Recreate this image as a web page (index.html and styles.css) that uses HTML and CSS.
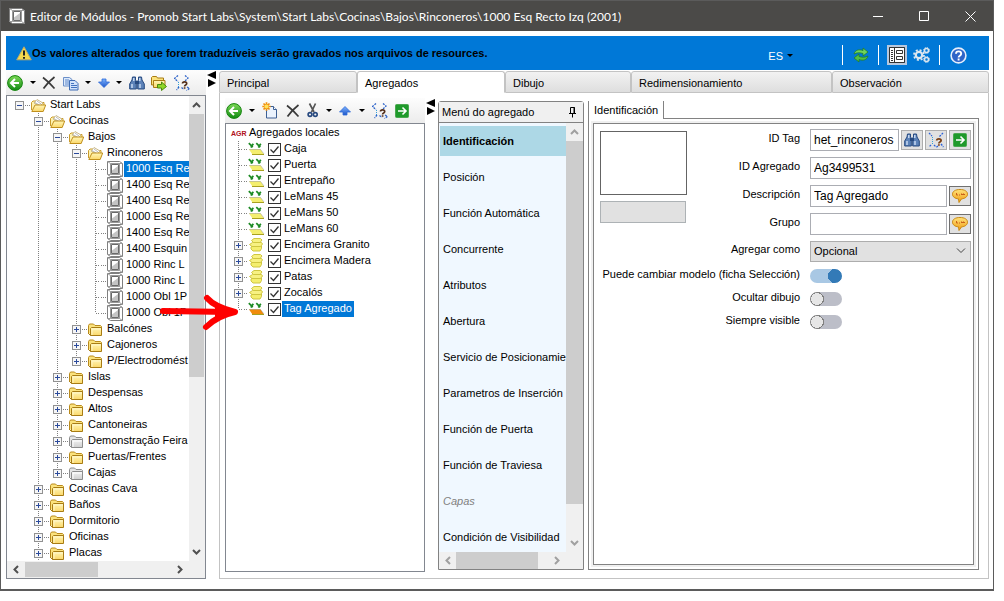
FILE: index.html
```html
<!DOCTYPE html>
<html lang="es">
<head>
    <meta charset="utf-8">
    <title>Editor de Módulos</title>
    <link rel="stylesheet" href="styles.css">
</head>
<body>
    <!-- Icon sprites -->
    <svg class="sprites" aria-hidden="true">
        <defs>
            <linearGradient id="gGreen" x1="0" y1="0" x2="0" y2="1"><stop offset="0" stop-color="#7ed957"/><stop offset="1" stop-color="#0f8a12"/></linearGradient>
            <linearGradient id="gBlue" x1="0" y1="0" x2="0" y2="1"><stop offset="0" stop-color="#7db4ff"/><stop offset="1" stop-color="#1c55c8"/></linearGradient>
            <linearGradient id="gFolder" x1="0" y1="0" x2="0" y2="1"><stop offset="0" stop-color="#fff6b8"/><stop offset="1" stop-color="#fbd86a"/></linearGradient>
            <linearGradient id="gGray" x1="0" y1="0" x2="0" y2="1"><stop offset="0" stop-color="#f2f2f2"/><stop offset="1" stop-color="#cfcfcf"/></linearGradient>
            <linearGradient id="gGold" x1="0" y1="0" x2="0" y2="1"><stop offset="0" stop-color="#ffe27a"/><stop offset="1" stop-color="#f09a10"/></linearGradient>
        </defs>
        <symbol id="i-module" viewBox="0 0 16 16">
            <path d="M.5.5h12l3 2v13h-12l-3-2z" fill="#fff" stroke="#808080"/>
            <path d="M.5.5l3 2h12M3.500 2.500v11L.5 13.500M12.500 13.500l3 2M3.500 13.500h9v-11" fill="none" stroke="#9a9a9a"/>
            <path d="M4.500 3.500h7v9h-7z" fill="#fff" stroke="#6a6a6a"/>
            <path d="M5 12V9.500L11 5v7z" fill="#c4c4c4"/>
        </symbol>
        <symbol id="i-open" viewBox="0 0 16 16">
            <path d="M.5 13V5.500L2 4h3l1 1.500h7V8" fill="#fff3b0" stroke="#c99b2c"/>
            <path d="M3 6l3-3.500L12 6l-3 3z" fill="#fff" stroke="#c9b98a"/>
            <path d="M4 5.500l5 3M6 4l4 3" stroke="#b9b9b9" fill="none"/>
            <path d="M.8 14.500L4 8h10.700l-2.500 6.500z" fill="url(#gFolder)" stroke="#c08f1c"/>
        </symbol>
        <symbol id="i-folder" viewBox="0 0 16 16">
            <path d="M.5 13V4.500L1.500 3h4l1.500 1.500h5.500l1 1V7" fill="#fbe27c" stroke="#b98a1c"/>
            <path d="M2.500 14.500v-7l1-1h10v8z" fill="url(#gFolder)" stroke="#a87c14"/>
            <path d="M4 14V8h9" stroke="#fff6c8" fill="none"/>
            <path d="M.5 12.500l2 2" stroke="#a87c14" fill="none"/>
        </symbol>
        <symbol id="i-folder-gray" viewBox="0 0 16 16">
            <path d="M.5 13V4.500L1.500 3h4l1.500 1.500h5.500l1 1V7" fill="#e4e4e4" stroke="#8c8c8c"/>
            <path d="M2.500 14.500v-7l1-1h10v8z" fill="url(#gGray)" stroke="#8c8c8c"/>
            <path d="M4 14V8h9" stroke="#fff" fill="none"/>
            <path d="M.5 12.500l2 2" stroke="#8c8c8c" fill="none"/>
        </symbol>
        <symbol id="i-back" viewBox="0 0 16 16">
            <circle cx="8" cy="8" r="7.400" fill="url(#gGreen)" stroke="#16860f"/>
            <path d="M8 4L4 8l4 4M4.500 8H12" fill="none" stroke="#fff" stroke-width="2"/>
        </symbol>
        <symbol id="i-delete" viewBox="0 0 14 14">
            <path d="M1 1.500c4 3 8 7 11.500 11M12.500 1C8 4.500 4 9 1.500 12.500" fill="none" stroke="#3a3a3a" stroke-width="1.700"/>
        </symbol>
        <symbol id="i-copy" viewBox="0 0 16 16">
            <path d="M.5 2.500h6l2.500 2V11H.5z" fill="#dce9fb" stroke="#6b8fc8"/>
            <path d="M2 5h4M2 7h4M2 9h4" stroke="#5f88c9"/>
            <path d="M6.500 5.500h5.500l3 3v6.500H6.500z" fill="#d2e3fb" stroke="#3f6db5"/>
            <path d="M8 8.500h3M8 10.500h6M8 12.500h6" stroke="#4374c0"/>
        </symbol>
        <symbol id="i-down" viewBox="0 0 12 10">
            <path d="M4 1h4v3h3.500L6 9.500.5 4H4z" fill="url(#gBlue)" stroke="#2f6bd8" stroke-width=".8"/>
        </symbol>
        <symbol id="i-up" viewBox="0 0 12 10">
            <path d="M4 9h4V6h3.500L6 .5.5 6H4z" fill="url(#gBlue)" stroke="#2f6bd8" stroke-width=".8"/>
        </symbol>
        <symbol id="i-find" viewBox="0 0 16 14">
            <path d="M3.500 1h3v3l.8 1v8H.7V8L3 4zM12.500 1h-3v3l-.8 1v8h6.600V8L13 4z" fill="#5c82b8" stroke="#274a80"/>
            <path d="M6 5h4v3H6z" fill="#274a80"/>
            <path d="M3 8v4M11 8v4M4.800 2v3M10.800 2v3" stroke="#d7e6fa" stroke-width="1.300"/>
        </symbol>
        <symbol id="i-move" viewBox="0 0 16 16">
            <path d="M.5 10V2.500l1-1h4l1 1.500h6V9z" fill="#fbe27c" stroke="#a87c14"/>
            <path d="M2.500 12.500v-7h11.500v7z" fill="url(#gFolder)" stroke="#a87c14"/>
            <path d="M6.500 9.500h4V7l5 4.500-5 4V13h-4z" fill="#8fd628" stroke="#4b8a10"/>
        </symbol>
        <symbol id="i-where" viewBox="0 0 16 16">
            <path d="M4 .5L.5 3.500 4 6.500" fill="none" stroke="#2c62c8" stroke-width="1.300" stroke-dasharray="2 1"/>
            <path d="M4.500 7v5" stroke="#35a0d8" stroke-dasharray="1 1"/>
            <path d="M11 .5L14 3l-3 3M5 12l-2.500 3M7.500 12.500l2.500 2M13 12l2.500 1.500-3 2" fill="none" stroke="#2c62c8" stroke-width="1.300" stroke-dasharray="2 1"/>
            <path d="M8.500 8.500c0-2.300 4.200-2.300 4.200 0 0 1.700-2.100 1.300-2.100 2.900M10.600 12.200v1.500" fill="none" stroke="#54301c" stroke-width="1.700"/>
        </symbol>
        <symbol id="i-where-field" viewBox="0 0 16 16">
            <path d="M1 1l3 3M15 1l-4 4M3 13l-2 2M6 13l2 2M13 12l2.500 3M10 14l-2 1.500" fill="none" stroke="#2c62d8" stroke-width="1.300" stroke-dasharray="2 1"/>
            <path d="M4.500 5v8" stroke="#35a0d8" stroke-dasharray="1 1"/>
            <path d="M8.700 8.500c0-2.300 4.400-2.300 4.400 0 0 1.700-2.200 1.300-2.200 2.900M10.900 12.200v1.600" fill="none" stroke="#7a3f14" stroke-width="1.800"/>
        </symbol>
        <symbol id="i-new" viewBox="0 0 16 17">
            <path d="M4.500 4.500h7l3 3v8.500h-10z" fill="#eaf2fd" stroke="#3c5f94"/>
            <path d="M11.500 4.500v3h3" fill="#fff" stroke="#3c5f94"/>
            <path d="M4.500.3v8.400M.3 4.500h8.400M1.500 1.500l6 6M7.500 1.500l-6 6" stroke="#f0900c" stroke-width="1.700"/>
            <circle cx="4.500" cy="4.500" r="2" fill="#ffe25a"/>
        </symbol>
        <symbol id="i-cut" viewBox="0 0 12 15">
            <path d="M2.500.5L7 9M8.500.5L4.500 9" stroke="#555" stroke-width="1.700" fill="none"/>
            <circle cx="3" cy="11.500" r="1.900" fill="none" stroke="#27497f" stroke-width="1.600"/>
            <circle cx="8.300" cy="11.500" r="1.900" fill="none" stroke="#27497f" stroke-width="1.600"/>
        </symbol>
        <symbol id="i-go" viewBox="0 0 14 14">
            <rect x=".5" y=".5" width="13" height="13" rx="1" fill="#1f9a2b" stroke="#4aa850"/>
            <path d="M7.500 3.500L11 7l-3.500 3.500M3 7h7.500" fill="none" stroke="#fff" stroke-width="1.600"/>
        </symbol>
        <symbol id="i-part" viewBox="0 0 17 14">
            <path d="M.8 1.200l4 4M5.300 1.800L2.800 5.500M8.300 1.200l4 4M12.800 1.800l-2.500 3.700" fill="none" stroke="#1d8a24" stroke-width="1.700"/>
            <path d="M1 7.500h11.500l3.500 5H4.500z" fill="currentColor"/>
            <path d="M1 7.500h11.500l3.500 4.500" fill="none" stroke="#000" stroke-opacity=".2"/>
            <path d="M4 12.500h12" stroke="#a8a020"/>
        </symbol>
        <symbol id="i-stack" viewBox="0 0 17 16">
            <path d="M3 12V10l2-1h8.500v2.500l-1.500 2.500H5z" fill="#f4ee6e" stroke="#cfc640"/>
            <path d="M1.500 7.500l3-2h9l1 1.500-2 2.500H4z" fill="#f7f182" stroke="#cfc640"/>
            <path d="M3.500 3.500l2.500-2h6.500l1.500 1.500-2 2.500H5.500z" fill="#f7f182" stroke="#cfc640"/>
        </symbol>
        <symbol id="i-balloon" viewBox="0 0 16 16">
            <path d="M8 1.500c4.500 0 7.500 1.700 7.500 4.700 0 2.600-2.500 4.300-6 4.700L7 14.500l-.5-3.600C3 10.500.5 8.800.5 6.200.5 3.200 3.500 1.500 8 1.500z" fill="url(#gGold)" stroke="#c98a14"/>
            <path d="M4.500 5v2H6M7 7h1M9.500 5.500v1M11.500 5.500v1M9 6.500h4" fill="none" stroke="#c8601a"/>
        </symbol>
    </svg>

    <div class="window">
        <header class="titlebar">
            <svg width="16" height="16"><use href="#i-module"/></svg>
            <h1>Editor de Módulos - Promob Start Labs\System\Start Labs\Cocinas\Bajos\Rinconeros\1000 Esq Recto Izq (2001)</h1>
            <button class="caption" aria-label="Minimizar"><svg width="11" height="11"><path d="M0 5.500h10" stroke="#fff"/></svg></button>
            <button class="caption" aria-label="Maximizar"><svg width="11" height="11"><path d="M.5.5h9v9h-9z" fill="none" stroke="#fff"/></svg></button>
            <button class="caption" aria-label="Cerrar"><svg width="11" height="11"><path d="M.5.5l10 10M10.500.5l-10 10" stroke="#fff"/></svg></button>
        </header>

        <div class="banner">
            <svg width="16" height="15" viewBox="0 0 16 15"><path d="M8 .8l7.300 13H.7z" fill="#f4d84e" stroke="#b8a86a"/><path d="M8 4.500v5M8 11v1.700" stroke="#222" stroke-width="2"/></svg>
            <strong>Os valores alterados que forem traduzíveis serão gravados nos arquivos de resources.</strong>
            <button class="lang">ES <i class="caret"></i></button>
            <button class="tool sep" aria-label="Actualizar"><svg width="16" height="16"><path d="M1 7c1-4 5-5 9-3.500V1l5 4-5 4V6.500C7 5.500 4 5.500 1 7z" fill="#6fd45a" stroke="#1f7d2a" stroke-width=".8"/><path d="M15 9c-1 4-5 5-9 3.500V15l-5-4 5-4v2.500c3 1 6 1 9-.5z" fill="#52bf42" stroke="#1f7d2a" stroke-width=".8"/></svg></button>
            <button class="tool sep pressed" aria-label="Ficha"><svg width="16" height="16"><path d="M.5.5h15v15H.5z" fill="#fff" stroke="#333"/><path d="M5.500 1v14M2 3.500h2M2 5.500h2M2 7.500h2M2 9.500h2M2 11.500h2M2 13.500h2" stroke="#333"/><path d="M7.500 3.500h6v3h-6zM7.500 9.500h6v3h-6z" fill="none" stroke="#333"/></svg></button>
            <button class="tool" aria-label="Opciones"><svg width="17" height="16"><g fill="none" stroke="#dbe6ef"><circle cx="6" cy="8" r="3.200" stroke-width="2.200"/><circle cx="6" cy="8" r="5" stroke-width="1.800" stroke-dasharray="2 1.930"/><circle cx="13.500" cy="3.500" r="2" stroke-width="1.500"/><circle cx="13.500" cy="3.500" r="3" stroke-dasharray="1.200 1.150"/><circle cx="13.500" cy="12.500" r="2" stroke-width="1.500"/><circle cx="13.500" cy="12.500" r="3" stroke-dasharray="1.200 1.150"/></g></svg></button>
            <button class="tool sep" aria-label="Ayuda"><svg width="17" height="17"><circle cx="8.500" cy="8.500" r="7.400" fill="#2f64c8" stroke="#e6eefb" stroke-width="1.600"/><path d="M6 6.800c0-3.200 5.200-3.200 5.200 0 0 2-2.600 1.800-2.600 3.600M8.600 11.600v1.800" fill="none" stroke="#fff" stroke-width="1.900"/></svg></button>
        </div>

        <div class="workspace">
            <section class="side">
                <div class="toolbar">
                    <button aria-label="Atrás"><svg width="16" height="16"><use href="#i-back"/></svg></button>
                    <i class="caret"></i>
                    <button aria-label="Eliminar"><svg width="14" height="14"><use href="#i-delete"/></svg></button>
                    <button aria-label="Copiar"><svg width="16" height="16"><use href="#i-copy"/></svg></button>
                    <i class="caret"></i>
                    <button aria-label="Bajar"><svg width="12" height="10"><use href="#i-down"/></svg></button>
                    <i class="caret"></i>
                    <button aria-label="Buscar"><svg width="16" height="14"><use href="#i-find"/></svg></button>
                    <button aria-label="Mover"><svg width="16" height="16"><use href="#i-move"/></svg></button>
                    <button aria-label="Localizar"><svg width="16" height="16"><use href="#i-where"/></svg></button>
                </div>
                <div class="panel scroll-box">
                    <ul class="tree module-tree">
                        <li>
                            <div class="row"><button class="expander open" aria-label="Contraer"></button><i class="dots"></i><svg><use href="#i-open"/></svg><span class="name">Start Labs</span></div>
                            <ul>
                                <li>
                                    <div class="row"><button class="expander open" aria-label="Contraer"></button><i class="dots"></i><svg><use href="#i-open"/></svg><span class="name">Cocinas</span></div>
                                    <ul>
                                        <li>
                                            <div class="row"><button class="expander open" aria-label="Contraer"></button><i class="dots"></i><svg><use href="#i-open"/></svg><span class="name">Bajos</span></div>
                                            <ul>
                                                <li>
                                                    <div class="row"><button class="expander open" aria-label="Contraer"></button><i class="dots"></i><svg><use href="#i-open"/></svg><span class="name">Rinconeros</span></div>
                                                    <ul>
                                                        <li><div class="row"><i class="leaf"></i><i class="dots"></i><svg><use href="#i-module"/></svg><span class="name selected">1000 Esq Re</span></div></li>
                                                        <li><div class="row"><i class="leaf"></i><i class="dots"></i><svg><use href="#i-module"/></svg><span class="name">1400 Esq Re</span></div></li>
                                                        <li><div class="row"><i class="leaf"></i><i class="dots"></i><svg><use href="#i-module"/></svg><span class="name">1400 Esq Re</span></div></li>
                                                        <li><div class="row"><i class="leaf"></i><i class="dots"></i><svg><use href="#i-module"/></svg><span class="name">1000 Esq Re</span></div></li>
                                                        <li><div class="row"><i class="leaf"></i><i class="dots"></i><svg><use href="#i-module"/></svg><span class="name">1400 Esq Re</span></div></li>
                                                        <li><div class="row"><i class="leaf"></i><i class="dots"></i><svg><use href="#i-module"/></svg><span class="name">1400 Esquin</span></div></li>
                                                        <li><div class="row"><i class="leaf"></i><i class="dots"></i><svg><use href="#i-module"/></svg><span class="name">1000 Rinc L</span></div></li>
                                                        <li><div class="row"><i class="leaf"></i><i class="dots"></i><svg><use href="#i-module"/></svg><span class="name">1000 Rinc L</span></div></li>
                                                        <li><div class="row"><i class="leaf"></i><i class="dots"></i><svg><use href="#i-module"/></svg><span class="name">1000 Obl 1P</span></div></li>
                                                        <li><div class="row"><i class="leaf"></i><i class="dots"></i><svg><use href="#i-module"/></svg><span class="name">1000 Obl 1P</span></div></li>
                                                    </ul>
                                                </li>
                                                <li><div class="row"><button class="expander" aria-label="Expandir"></button><i class="dots"></i><svg><use href="#i-folder"/></svg><span class="name">Balcónes</span></div></li>
                                                <li><div class="row"><button class="expander" aria-label="Expandir"></button><i class="dots"></i><svg><use href="#i-folder"/></svg><span class="name">Cajoneros</span></div></li>
                                                <li><div class="row"><button class="expander" aria-label="Expandir"></button><i class="dots"></i><svg><use href="#i-folder"/></svg><span class="name">P/Electrodomést</span></div></li>
                                            </ul>
                                        </li>
                                        <li><div class="row"><button class="expander" aria-label="Expandir"></button><i class="dots"></i><svg><use href="#i-folder"/></svg><span class="name">Islas</span></div></li>
                                        <li><div class="row"><button class="expander" aria-label="Expandir"></button><i class="dots"></i><svg><use href="#i-folder"/></svg><span class="name">Despensas</span></div></li>
                                        <li><div class="row"><button class="expander" aria-label="Expandir"></button><i class="dots"></i><svg><use href="#i-folder"/></svg><span class="name">Altos</span></div></li>
                                        <li><div class="row"><button class="expander" aria-label="Expandir"></button><i class="dots"></i><svg><use href="#i-folder"/></svg><span class="name">Cantoneiras</span></div></li>
                                        <li><div class="row"><button class="expander" aria-label="Expandir"></button><i class="dots"></i><svg><use href="#i-folder-gray"/></svg><span class="name">Demonstração Feira</span></div></li>
                                        <li><div class="row"><button class="expander" aria-label="Expandir"></button><i class="dots"></i><svg><use href="#i-folder"/></svg><span class="name">Puertas/Frentes</span></div></li>
                                        <li><div class="row"><button class="expander" aria-label="Expandir"></button><i class="dots"></i><svg><use href="#i-folder-gray"/></svg><span class="name">Cajas</span></div></li>
                                    </ul>
                                </li>
                                <li><div class="row"><button class="expander" aria-label="Expandir"></button><i class="dots"></i><svg><use href="#i-folder"/></svg><span class="name">Cocinas Cava</span></div></li>
                                <li><div class="row"><button class="expander" aria-label="Expandir"></button><i class="dots"></i><svg><use href="#i-folder"/></svg><span class="name">Baños</span></div></li>
                                <li><div class="row"><button class="expander" aria-label="Expandir"></button><i class="dots"></i><svg><use href="#i-folder"/></svg><span class="name">Dormitorio</span></div></li>
                                <li><div class="row"><button class="expander" aria-label="Expandir"></button><i class="dots"></i><svg><use href="#i-folder"/></svg><span class="name">Oficinas</span></div></li>
                                <li class="more"><div class="row"><button class="expander" aria-label="Expandir"></button><i class="dots"></i><svg><use href="#i-folder"/></svg><span class="name">Placas</span></div></li>
                            </ul>
                        </li>
                    </ul>
                    <div class="bar vertical">
                        <svg width="9" height="6"><path d="M1 5l3.500-3.500L8 5"/></svg><i class="thumb"></i><svg width="9" height="6"><path d="M1 1l3.500 3.500L8 1"/></svg>
                    </div>
                    <div class="bar horizontal">
                        <svg width="6" height="9"><path d="M5 1L1.500 4.500 5 8"/></svg><i class="thumb"></i><svg width="6" height="9"><path d="M1 1l3.500 3.500L1 8"/></svg>
                    </div>
                </div>
            </section>

            <button class="splitter" aria-label="Dividir"><svg width="10" height="20"><path d="M10 1v8L1 5zM2 9v8l8-4z"/></svg></button>

            <main class="editor">
                <nav class="tabs">
                    <button>Principal</button>
                    <button class="active">Agregados</button>
                    <button>Dibujo</button>
                    <button>Redimensionamiento</button>
                    <button>Observación</button>
                </nav>
                <div class="tab-body">
                    <section class="side">
                        <div class="toolbar">
                            <button aria-label="Atrás"><svg width="16" height="16"><use href="#i-back"/></svg></button>
                            <i class="caret"></i>
                            <button aria-label="Nuevo"><svg width="16" height="17"><use href="#i-new"/></svg></button>
                            <button aria-label="Eliminar"><svg width="14" height="14"><use href="#i-delete"/></svg></button>
                            <button aria-label="Cortar"><svg width="12" height="15"><use href="#i-cut"/></svg></button>
                            <i class="caret"></i>
                            <button aria-label="Subir"><svg width="12" height="10"><use href="#i-up"/></svg></button>
                            <i class="caret"></i>
                            <button aria-label="Localizar"><svg width="16" height="16"><use href="#i-where"/></svg></button>
                            <button aria-label="Ir"><svg width="14" height="14"><use href="#i-go"/></svg></button>
                        </div>
                        <div class="panel">
                            <ul class="tree part-tree">
                                <li>
                                    <div class="row root"><b class="agr">AGR</b><span class="name">Agregados locales</span></div>
                                    <ul>
                                        <li><div class="row"><i class="leaf"></i><i class="dots"></i><svg><use href="#i-part"/></svg><input type="checkbox" id="p1" checked><label class="name" for="p1">Caja</label></div></li>
                                        <li><div class="row"><i class="leaf"></i><i class="dots"></i><svg><use href="#i-part"/></svg><input type="checkbox" id="p2" checked><label class="name" for="p2">Puerta</label></div></li>
                                        <li><div class="row"><i class="leaf"></i><i class="dots"></i><svg><use href="#i-part"/></svg><input type="checkbox" id="p3" checked><label class="name" for="p3">Entrepaño</label></div></li>
                                        <li><div class="row"><i class="leaf"></i><i class="dots"></i><svg><use href="#i-part"/></svg><input type="checkbox" id="p4" checked><label class="name" for="p4">LeMans 45</label></div></li>
                                        <li><div class="row"><i class="leaf"></i><i class="dots"></i><svg><use href="#i-part"/></svg><input type="checkbox" id="p5" checked><label class="name" for="p5">LeMans 50</label></div></li>
                                        <li><div class="row"><i class="leaf"></i><i class="dots"></i><svg><use href="#i-part"/></svg><input type="checkbox" id="p6" checked><label class="name" for="p6">LeMans 60</label></div></li>
                                        <li><div class="row"><button class="expander" aria-label="Expandir"></button><i class="dots"></i><svg class="stack"><use href="#i-stack"/></svg><input type="checkbox" id="p7" checked><label class="name" for="p7">Encimera Granito</label></div></li>
                                        <li><div class="row"><button class="expander" aria-label="Expandir"></button><i class="dots"></i><svg class="stack"><use href="#i-stack"/></svg><input type="checkbox" id="p8" checked><label class="name" for="p8">Encimera Madera</label></div></li>
                                        <li><div class="row"><button class="expander" aria-label="Expandir"></button><i class="dots"></i><svg class="stack"><use href="#i-stack"/></svg><input type="checkbox" id="p9" checked><label class="name" for="p9">Patas</label></div></li>
                                        <li><div class="row"><button class="expander" aria-label="Expandir"></button><i class="dots"></i><svg class="stack"><use href="#i-stack"/></svg><input type="checkbox" id="p10" checked><label class="name" for="p10">Zocalós</label></div></li>
                                        <li><div class="row"><i class="leaf"></i><i class="dots"></i><svg class="orange"><use href="#i-part"/></svg><input type="checkbox" id="p11" checked><label class="name selected" for="p11">Tag Agregado</label></div></li>
                                    </ul>
                                </li>
                            </ul>
                        </div>
                    </section>

                    <button class="splitter" aria-label="Dividir"><svg width="10" height="20"><path d="M10 1v8L1 5zM2 9v8l8-4z"/></svg></button>

                    <aside class="menu">
                        <header>
                            <span>Menú do agregado</span>
                            <button aria-label="Fijar"><svg width="9" height="12"><path d="M2.500 7V1.500h4V7M1 7.500h7M4.500 8v3.500" fill="none" stroke="#000"/><path d="M6 1v6" stroke="#000"/></svg></button>
                        </header>
                        <div class="scroll-box light">
                            <ul class="options">
                                <li><a href="#" class="current">Identificación</a></li>
                                <li><a href="#">Posición</a></li>
                                <li><a href="#">Función Automática</a></li>
                                <li><a href="#">Concurrente</a></li>
                                <li><a href="#">Atributos</a></li>
                                <li><a href="#">Abertura</a></li>
                                <li><a href="#">Servicio de Posicionamie</a></li>
                                <li><a href="#">Parametros de Inserción</a></li>
                                <li><a href="#">Función de Puerta</a></li>
                                <li><a href="#">Función de Traviesa</a></li>
                                <li><a href="#" class="disabled">Capas</a></li>
                                <li><a href="#">Condición de Visibilidad</a></li>
                            </ul>
                            <div class="bar vertical">
                                <svg width="9" height="6"><path d="M1 5l3.500-3.500L8 5"/></svg><i class="thumb"></i><svg width="9" height="6"><path d="M1 1l3.500 3.500L8 1"/></svg>
                            </div>
                            <div class="bar horizontal">
                                <svg width="6" height="9"><path d="M5 1L1.500 4.500 5 8"/></svg><i class="thumb"></i><svg width="6" height="9"><path d="M1 1l3.500 3.500L1 8"/></svg>
                            </div>
                        </div>
                    </aside>

                    <section class="properties">
                        <div class="page-tabs"><button>Identificación</button><i></i></div>
                        <div class="page">
                            <form class="fields">
                                <div class="preview">
                                    <div class="thumbnail"></div>
                                    <button type="button" aria-label="Imagen"></button>
                                </div>
                                <label for="tag">ID Tag</label>
                                <div class="control">
                                    <input type="text" id="tag" value="het_rinconeros">
                                    <button type="button" aria-label="Buscar"><svg width="16" height="14"><use href="#i-find"/></svg></button>
                                    <button type="button" aria-label="Localizar"><svg width="16" height="16"><use href="#i-where-field"/></svg></button>
                                    <button type="button" aria-label="Ir"><svg width="14" height="14"><use href="#i-go"/></svg></button>
                                </div>
                                <label for="agregado">ID Agregado</label>
                                <div class="control"><input type="text" id="agregado" value="Ag3499531"></div>
                                <label for="descripcion">Descripción</label>
                                <div class="control">
                                    <input type="text" id="descripcion" value="Tag Agregado">
                                    <button type="button" class="translate" aria-label="Traducir"><svg width="16" height="16"><use href="#i-balloon"/></svg></button>
                                </div>
                                <label for="grupo">Grupo</label>
                                <div class="control">
                                    <input type="text" id="grupo">
                                    <button type="button" class="translate" aria-label="Traducir"><svg width="16" height="16"><use href="#i-balloon"/></svg></button>
                                </div>
                                <label for="como">Agregar como</label>
                                <div class="control"><select id="como"><option>Opcional</option></select></div>
                                <label class="wide" for="cambiar">Puede cambiar modelo (ficha Selección)</label>
                                <div class="control"><input type="checkbox" class="switch" id="cambiar" checked></div>
                                <label for="ocultar">Ocultar dibujo</label>
                                <div class="control"><input type="checkbox" class="switch" id="ocultar"></div>
                                <label for="visible">Siempre visible</label>
                                <div class="control"><input type="checkbox" class="switch" id="visible"></div>
                            </form>
                        </div>
                    </section>
                </div>
            </main>
        </div>
    </div>

    <!-- Annotation over both trees -->
    <svg class="pointer" width="84" height="42" aria-hidden="true"><path d="M4 19L72 20" fill="none" stroke="#fe0000" stroke-width="6" stroke-linecap="round"/><path d="M48 6C54 13 64 17 76 20 62 23 54 28 47 35" fill="none" stroke="#fe0000" stroke-width="6" stroke-linecap="round" stroke-linejoin="round"/><path d="M56 13L78 20L56 27z" fill="#fe0000"/></svg>
</body>
</html>
```
FILE: styles.css
```css
* {
    box-sizing: border-box;
}
body {
    margin: 0;
    padding: 0 10px 10px 0;
    height: 100vh;
    background: #fff;
    color: #000;
    font: 11px "Liberation Sans", Arial, sans-serif;
}
button {
    font: inherit;
    color: inherit;
    background: none;
    border: none;
    padding: 0;
}
ul {
    list-style: none;
    margin: 0;
    padding: 0;
}
svg {
    display: block;
    flex: none;
}
.sprites {
    position: absolute;
    width: 0;
    height: 0;
}
.window {
    display: flex;
    flex-direction: column;
    height: 100%;
    border: 1px solid #5b5b5b;
    border-top: none;
    border-bottom-width: 2px;
}

/* Title bar */
.titlebar {
    display: flex;
    align-items: center;
    height: 31px;
    padding-left: 8px;
    background: #4b4a48;
    border-top: 1px solid #5b5b5b;
    color: #fff;
}
.titlebar h1 {
    flex: 1;
    margin: 0 0 0 5px;
    font: 12px Lato, "Segoe UI", sans-serif;
    white-space: nowrap;
}
.caption {
    display: flex;
    justify-content: center;
    width: 46px;
}

/* Warning banner */
.banner {
    display: flex;
    align-items: center;
    height: 34px;
    margin: 5px 4px 0 5px;
    padding: 0 20px 0 10px;
    background: #0078d7;
}
.banner strong {
    flex: 1;
    white-space: nowrap;
}
.lang {
    display: flex;
    align-items: center;
    gap: 4px;
    margin: 5px 42px 0 0;
    color: #fff;
}
.caret {
    flex: none;
    border: 3px solid transparent;
    border-top-color: #000;
    border-bottom: none;
}
.tool {
    display: flex;
    align-items: center;
    height: 20px;
    margin-top: 4px;
    padding: 0 2px;
}
.tool.sep {
    margin-left: 7px;
    padding-left: 10px;
    border-left: 1px solid #fff;
}
.tool.pressed svg {
    outline: 2px solid #b9c8dd;
}
.tool.pressed + .tool {
    margin-left: 4px;
}

/* Main areas */
.workspace {
    flex: 1;
    display: grid;
    grid-template-columns: 200px 13px minmax(0, 1fr);
    min-height: 0;
    padding: 0 4px 10px 5px;
}
.side {
    display: flex;
    flex-direction: column;
    min-width: 0;
    min-height: 0;
}
.toolbar {
    display: flex;
    align-items: center;
    justify-content: space-between;
    flex: none;
    height: 25px;
    padding: 0 16px 0 1px;
    background: linear-gradient(#fdfdfd, #ececec);
}
.panel {
    flex: 1;
    min-height: 0;
    overflow: hidden;
    background: #fff;
    border: 1px solid #828790;
}
.splitter {
    display: flex;
    align-items: flex-start;
}

/* Scrollable boxes */
.scroll-box {
    display: grid;
    grid-template-columns: minmax(0, 1fr) 17px;
    grid-template-rows: minmax(0, 1fr) 17px;
    background: #f0f0f0;
}
.panel.scroll-box {
    grid-template-columns: minmax(0, 1fr) 16px;
}
.scroll-box > ul {
    overflow: hidden;
    background: #fff;
}
.bar {
    display: flex;
    align-items: center;
    justify-content: space-between;
}
.bar path {
    fill: none;
    stroke: #505050;
    stroke-width: 2;
}
.light .bar path {
    stroke: #a0a0a0;
}
.bar.vertical {
    flex-direction: column;
    padding: 6px 0;
}
.panel .bar.vertical {
    padding-right: 1px;
}
.bar.horizontal {
    padding: 0 6px;
}
.thumb {
    background: #cdcdcd;
}
.vertical .thumb {
    width: 15px;
    height: 58%;
    margin: 6px 0 auto;
}
.horizontal .thumb {
    width: 43%;
    height: 15px;
    margin: 0 auto 0 6px;
}
.light .vertical .thumb {
    width: 17px;
    height: 87%;
}
.light .horizontal .thumb {
    width: 71%;
    height: 17px;
    margin-left: 5px;
}

/* Trees */
.tree {
    padding-top: 1px;
}
.row {
    display: flex;
    align-items: center;
    height: 16px;
    white-space: nowrap;
}
.row > svg {
    width: 16px;
    height: 16px;
}
.tree ul > li {
    background: repeating-linear-gradient(#808080 0 1px, transparent 1px 2px) 4px 0 / 1px 100% no-repeat;
}
.tree ul > li:last-child {
    background-size: 1px 8px;
}
.tree ul > li.more {
    background-size: 1px 100%;
}
.expander {
    flex: none;
    width: 9px;
    height: 9px;
    border: 1px solid #919191;
    background: linear-gradient(#2b4a9b, #2b4a9b) center / 5px 1px no-repeat, linear-gradient(#2b4a9b, #2b4a9b) center / 1px 5px no-repeat, #f6f6f6;
}
.expander.open {
    background: linear-gradient(#2b4a9b, #2b4a9b) center / 5px 1px no-repeat, #f6f6f6;
}
.dots,
.leaf {
    flex: none;
    width: 7px;
    height: 1px;
    background: repeating-linear-gradient(90deg, transparent 0 1px, #808080 1px 2px);
}
.leaf {
    width: 5px;
    margin-left: 4px;
}
.name {
    height: 16px;
    margin-left: 1px;
    padding: 0 2px;
    line-height: 15px;
}
.module-tree .name {
    padding-right: 0;
}
.name.selected {
    background: #0078d7;
    color: #fff;
}
.module-tree {
    padding-left: 8px;
}
.module-tree ul {
    padding-left: 19px;
}
.part-tree {
    padding-left: 5px;
}
.part-tree ul {
    padding-left: 3px;
}
.part-tree .dots {
    width: 5px;
}
.part-tree svg {
    width: 17px;
    height: 14px;
    color: #f4ee6e;
}
.part-tree .stack {
    height: 16px;
}
.part-tree .orange {
    color: #f08c0c;
}
.agr {
    width: 15px;
    color: #b01020;
    font: bold 7px "Liberation Sans", Arial, sans-serif;
}
.row input {
    appearance: none;
    flex: none;
    width: 13px;
    height: 13px;
    margin: 0 0 0 3px;
    border: 1px solid #333;
    background: #fff;
}
.row input:checked {
    background: url("data:image/svg+xml,%3Csvg xmlns='http://www.w3.org/2000/svg' width='11' height='11'%3E%3Cpath d='M1.500 5.500l3 3 5-6' fill='none' stroke='%23333' stroke-width='1.300'/%3E%3C/svg%3E");
}

/* Editor tabs */
.editor {
    display: flex;
    flex-direction: column;
    min-height: 0;
    padding-top: 1px;
}
.tabs {
    display: grid;
    grid-template-columns: 138fr 148fr 126fr 201fr 157fr;
    flex: none;
    height: 22px;
}
.tabs button {
    padding: 1px 7px 0;
    background: linear-gradient(#f2f2f2, #dedede);
    border: 1px solid #c3c3c3;
    border-radius: 3px 3px 0 0;
    text-align: left;
}
.tabs .active {
    background: #fff;
    border-bottom-color: #fff;
}
.tab-body {
    flex: 1;
    display: grid;
    grid-template-columns: 200px 13px 146px minmax(0, 1fr);
    min-height: 0;
    padding: 5px 9px 6px 5px;
    border: 1px solid #c3c3c3;
    border-top: none;
}

/* Options menu */
.menu {
    display: flex;
    flex-direction: column;
    min-height: 0;
    margin: 3px 0 2px;
    border: 1px solid #828282;
    border-radius: 3px 3px 0 0;
}
.menu header {
    display: flex;
    align-items: center;
    justify-content: space-between;
    flex: none;
    height: 21px;
    padding: 0 6px 0 3px;
    background: #f0f0f0;
    border-bottom: 1px solid #828282;
}
.menu .scroll-box {
    flex: 1;
    min-height: 0;
}
.menu .options {
    padding: 3px 0 0 1px;
    background: #f0f8ff;
}
.options a {
    display: block;
    height: 30px;
    margin-bottom: 6px;
    padding-left: 3px;
    color: #000;
    line-height: 30px;
    text-decoration: none;
    white-space: nowrap;
}
.options .current {
    background: #add8e6;
    font-weight: bold;
}
.options .disabled {
    color: #808080;
    font-style: italic;
}

/* Properties page */
.properties {
    display: flex;
    flex-direction: column;
    min-height: 0;
    margin: 3px 0 2px 4px;
}
.page-tabs {
    display: flex;
    flex: none;
    height: 18px;
}
.page-tabs button {
    padding: 0 5px;
    border: 1px solid #828282;
    border-width: 0 1px;
}
.page-tabs i {
    flex: 1;
    border-bottom: 1px solid #828282;
}
.page {
    flex: 1;
    min-height: 0;
    padding: 4px;
    border: 1px solid #828282;
    border-top: none;
}
.fields {
    display: grid;
    grid-template-columns: 88px minmax(0, 1fr) 161px;
    grid-template-rows: repeat(4, 28px) 26px repeat(3, 23px);
    column-gap: 9px;
    align-items: center;
    height: 100%;
    padding: 2px 2px 0 6px;
    border: 1px solid #828282;
    outline: 2px solid #f0f0f0;
}
.fields > label {
    grid-column: 2;
    padding: 0 1px 4px 0;
    text-align: right;
    white-space: nowrap;
}
.fields > .wide {
    grid-column: 1 / 3;
}
.preview {
    grid-row: 1 / span 4;
    align-self: start;
    padding: 5px 1px 0 0;
}
.thumbnail {
    height: 64px;
    border: 1px solid #646464;
}
.preview button {
    width: 86px;
    height: 22px;
    margin-top: 6px;
    background: #e1e1e1;
    border: 1px solid #adb2b5;
}
.control {
    grid-column: 3;
    display: flex;
    align-items: center;
    gap: 2px;
}
.control input[type="text"] {
    flex: 1;
    min-width: 0;
    height: 22px;
    padding: 0 3px;
    border: 1px solid #abadb3;
    font: 12px "Liberation Sans", Arial, sans-serif;
}
.control button {
    display: grid;
    place-items: center;
    width: 22px;
    height: 20px;
    background: #e1e1e1;
    border: 1px solid #adadad;
}
.control .translate {
    border-color: #707070;
}
.control select {
    appearance: none;
    width: 100%;
    height: 21px;
    padding: 0 3px;
    border: 1px solid #adadad;
    border-radius: 0;
    color: #000;
    font: inherit;
    background: url("data:image/svg+xml,%3Csvg xmlns='http://www.w3.org/2000/svg' width='10' height='6'%3E%3Cpath d='M1 .5l4 4 4-4' fill='none' stroke='%23444'/%3E%3C/svg%3E") right 4px center no-repeat #e1e1e1;
}
.switch {
    appearance: none;
    width: 32px;
    height: 14px;
    margin: 0;
    border-radius: 7px;
    background: radial-gradient(circle at 7px 7px, #e6e6e6 6px, #808080 6px 7px, transparent 7px) #bcbec8;
}
.switch:checked {
    background: radial-gradient(circle at 25px 7px, #337ab7 7px, transparent 7px) #a9c8e4;
}

/* Red annotation arrow */
.pointer {
    position: absolute;
    left: 159px;
    top: 292px;
}
```
